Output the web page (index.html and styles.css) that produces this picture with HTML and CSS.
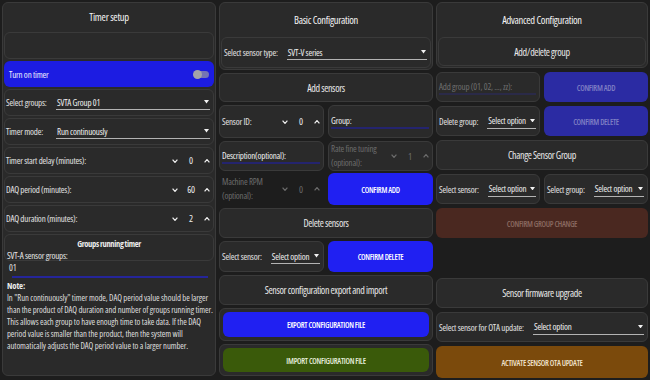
FILE: index.html
```html
<!DOCTYPE html>
<html lang="en">
<head>
<meta charset="utf-8">
<title>Sensor configuration</title>
<link rel="stylesheet" href="styles.css">
</head>
<body>
<main class="app">
  <!-- LEFT: Timer setup -->
  <section class="panel timer">
    <h2 class="title">Timer setup</h2>
    <div class="box"></div>
    <div class="toggle-row"><span>Turn on timer</span><span class="switch"><span class="knob"></span></span></div>
    <div class="box row"><span class="lbl w50">Select groups:</span><div class="select"><span>SVTA Group 01</span><svg class="caret" viewBox="0 0 6 4"><path d="M0 0H6L3 4Z"/></svg></div></div>
    <div class="box row"><span class="lbl w50">Timer mode:</span><div class="select"><span>Run continuously</span><svg class="caret" viewBox="0 0 6 4"><path d="M0 0H6L3 4Z"/></svg></div></div>
    <div class="box row"><span class="lbl grow">Timer start delay (minutes):</span><div class="spin"><svg class="chev" viewBox="0 0 6 4"><path d="M0.6 0.6L3 3.4L5.4 0.6"/></svg><span class="num">0</span><svg class="chev" viewBox="0 0 6 4"><path d="M0.6 3.4L3 0.6L5.4 3.4"/></svg></div></div>
    <div class="box row"><span class="lbl grow">DAQ period (minutes):</span><div class="spin"><svg class="chev" viewBox="0 0 6 4"><path d="M0.6 0.6L3 3.4L5.4 0.6"/></svg><span class="num">60</span><svg class="chev" viewBox="0 0 6 4"><path d="M0.6 3.4L3 0.6L5.4 3.4"/></svg></div></div>
    <div class="box row"><span class="lbl grow">DAQ duration (minutes):</span><div class="spin"><svg class="chev" viewBox="0 0 6 4"><path d="M0.6 0.6L3 3.4L5.4 0.6"/></svg><span class="num">2</span><svg class="chev" viewBox="0 0 6 4"><path d="M0.6 3.4L3 0.6L5.4 3.4"/></svg></div></div>
    <div class="box groups">
      <h3 class="sub">Groups running timer</h3>
      <div class="gl">SVT-A sensor groups:</div>
      <div class="gv">01</div>
      <div class="gline"></div>
      <p class="note"><b>Note:</b><br>In "Run continuously" timer mode, DAQ period value should be larger<br>than the product of DAQ duration and number of groups running timer.<br>This allows each group to have enough time to take data. If the DAQ<br>period value is smaller than the product, then the system will<br>automatically adjusts the DAQ period value to a larger number.</p>
    </div>
  </section>

  <!-- MIDDLE: Basic configuration -->
  <section class="col mid">
    <div class="panel head">
      <h2 class="title">Basic Configuration</h2>
      <div class="box row"><span class="lbl">Select sensor type:</span><div class="select"><span>SVT-V series</span><svg class="caret" viewBox="0 0 6 4"><path d="M0 0H6L3 4Z"/></svg></div></div>
    </div>
    <div class="box hdr h29">Add sensors</div>
    <div class="pair h33">
      <div class="box row"><span class="lbl grow">Sensor ID:</span><div class="spin"><svg class="chev" viewBox="0 0 6 4"><path d="M0.6 0.6L3 3.4L5.4 0.6"/></svg><span class="num">0</span><svg class="chev" viewBox="0 0 6 4"><path d="M0.6 3.4L3 0.6L5.4 3.4"/></svg></div></div>
      <div class="box row"><div class="input"><span>Group:</span></div></div>
    </div>
    <div class="pair h29">
      <div class="box row"><div class="input"><span>Description(optional):</span></div></div>
      <div class="box row dis"><span class="lbl grow two">Rate fine tuning<br>(optional):</span><div class="spin"><svg class="chev" viewBox="0 0 6 4"><path d="M0.6 0.6L3 3.4L5.4 0.6"/></svg><span class="num">1</span><svg class="chev" viewBox="0 0 6 4"><path d="M0.6 3.4L3 0.6L5.4 3.4"/></svg></div></div>
    </div>
    <div class="pair h32">
      <div class="row plain dis"><span class="lbl grow two">Machine RPM<br>(optional):</span><div class="spin"><svg class="chev" viewBox="0 0 6 4"><path d="M0.6 0.6L3 3.4L5.4 0.6"/></svg><span class="num">0</span><svg class="chev" viewBox="0 0 6 4"><path d="M0.6 3.4L3 0.6L5.4 3.4"/></svg></div></div>
      <button class="btn blue">CONFIRM ADD</button>
    </div>
    <div class="box hdr h30">Delete sensors</div>
    <div class="pair h31">
      <div class="box row"><span class="lbl">Select sensor:</span><div class="select"><span>Select option</span><svg class="caret" viewBox="0 0 6 4"><path d="M0 0H6L3 4Z"/></svg></div></div>
      <button class="btn blue">CONFIRM DELETE</button>
    </div>
    <div class="box hdr h30">Sensor configuration export and import</div>
    <div class="box card h33"><button class="btn blue">EXPORT CONFIGURATION FILE</button></div>
    <div class="box card h32"><button class="btn green">IMPORT CONFIGURATION FILE</button></div>
  </section>

  <!-- RIGHT: Advanced configuration -->
  <section class="col right">
    <div class="panel head">
      <h2 class="title">Advanced Configuration</h2>
      <div class="box hdr inner">Add/delete group</div>
    </div>
    <div class="pair h30">
      <div class="box row"><div class="input ph"><span>Add group (01, 02, ..., zz):</span></div></div>
      <button class="btn blue-dis">CONFIRM ADD</button>
    </div>
    <div class="pair h30">
      <div class="box row"><span class="lbl">Delete group:</span><div class="select"><span>Select option</span><svg class="caret" viewBox="0 0 6 4"><path d="M0 0H6L3 4Z"/></svg></div></div>
      <button class="btn blue-dis">CONFIRM DELETE</button>
    </div>
    <div class="box hdr h30">Change Sensor Group</div>
    <div class="pair h30">
      <div class="box row"><span class="lbl">Select sensor:</span><div class="select"><span>Select option</span><svg class="caret" viewBox="0 0 6 4"><path d="M0 0H6L3 4Z"/></svg></div></div>
      <div class="box row"><span class="lbl">Select group:</span><div class="select"><span>Select option</span><svg class="caret" viewBox="0 0 6 4"><path d="M0 0H6L3 4Z"/></svg></div></div>
    </div>
    <button class="btn red-dis h30">CONFIRM GROUP CHANGE</button>
    <div class="spacer"></div>
    <div class="box hdr h30">Sensor firmware upgrade</div>
    <div class="box row h30"><span class="lbl">Select sensor for OTA update:</span><div class="select"><span>Select option</span><svg class="caret" viewBox="0 0 6 4"><path d="M0 0H6L3 4Z"/></svg></div></div>
    <button class="btn orange h32">ACTIVATE SENSOR OTA UPDATE</button>
  </section>
</main>
</body>
</html>
```

FILE: styles.css
```css
* {
  box-sizing: border-box;
  margin: 0;
  padding: 0;
}

html, body {
  width: 650px;
  height: 380px;
  overflow: hidden;
}

body {
  background: #1d1d1d;
  color: #e4e4e4;
  font-family: "Open Sans", "Liberation Sans", sans-serif;
  font-stretch: 75%;
  font-size: 9px;
  letter-spacing: -0.2px;
}

.app {
  display: grid;
  grid-template-columns: 214px 214px 212px;
  column-gap: 3px;
  padding: 2px;
  height: 380px;
}

.panel,
.box {
  background: #2a2a2a;
  border: 1px solid #3a3a3a;
  border-radius: 6px;
}

/* ---------- left panel ---------- */
.timer {
  display: flex;
  flex-direction: column;
  gap: 2px;
  padding: 0 1px 2px;
  height: 374px;
}

.title {
  font-size: 10.5px;
  font-weight: 500;
  letter-spacing: -0.3px;
  color: #f4f4f4;
  text-align: center;
  display: flex;
  align-items: center;
  justify-content: center;
}

.timer .title { height: 27px; }
.timer > .box { height: 27px; flex: none; }

.toggle-row {
  height: 26px;
  background: #1c1ce2;
  border-radius: 6px;
  display: flex;
  align-items: center;
  justify-content: space-between;
  padding: 0 5px 0 5px;
  color: #eeeeff;
}

.switch {
  position: relative;
  width: 15px;
  height: 7px;
  border-radius: 4px;
  background: #7474b4;
}

.knob {
  position: absolute;
  left: -1px;
  top: -1px;
  width: 9px;
  height: 9px;
  border-radius: 50%;
  background: #a3a3a8;
}

.row {
  display: flex;
  align-items: center;
  padding: 0 3px 0 2px;
  gap: 9px;
}

.timer .row { padding-left: 1px; }

.lbl {
  color: #e2e2e2;
  white-space: nowrap;
}

.w50 {
  width: 41px;
  flex: none;
}

.grow { flex: 1; }

.two {
  white-space: normal;
  line-height: 14px;
}

.select {
  flex: 1;
  min-width: 0;
  display: flex;
  align-items: center;
  justify-content: space-between;
  height: 15px;
  border-bottom: 1px solid #b3b3b3;
  padding: 0 1px;
  color: #f0f0f0;
  white-space: nowrap;
}

.caret {
  width: 5px;
  height: 3.5px;
  fill: #f2f2f2;
  flex: none;
}

.spin {
  display: flex;
  align-items: center;
  gap: 7px;
  color: #f0f0f0;
}

.chev {
  width: 6px;
  height: 4px;
  fill: none;
  stroke: currentColor;
  stroke-width: 1.2;
}

.num {
  min-width: 12px;
  text-align: center;
  font-size: 9.5px;
}

.dis .lbl,
.dis .spin {
  color: #6c6c6c;
}

/* groups running timer */
.groups {
  flex: 1;
  padding: 3px 2px 0 2px;
}

.sub {
  font-size: 8.5px;
  font-weight: 700;
  letter-spacing: -0.35px;
  text-align: center;
  line-height: 12px;
  color: #ececec;
}

.gl,
.gv {
  line-height: 12px;
}

.gv {
  padding-left: 2px;
}

.gline {
  height: 2px;
  margin: 2px 3px 0 5px;
  background: #25259a;
}

.note {
  margin-top: 2px;
  font-size: 8.7px;
  letter-spacing: -0.1px;
  line-height: 12px;
  color: #dedede;
  white-space: nowrap;
}

.note b { color: #ececec; }

/* ---------- columns ---------- */
.col {
  display: flex;
  flex-direction: column;
  gap: 3px;
  height: 376px;
}

.right { gap: 4px; }

.head {
  display: flex;
  flex-direction: column;
  padding: 0 1px 1px;
}

.mid .head { height: 68px; }
.right .head { height: 66px; }

.head .title {
  height: 34px;
  flex: none;
}

.head .box {
  flex: 1;
}

.hdr {
  display: flex;
  align-items: center;
  justify-content: center;
  font-size: 10px;
  color: #e8e8e8;
  letter-spacing: -0.35px;
}

.pair {
  display: grid;
  grid-template-columns: 1fr 1fr;
  gap: 4px;
}

.pair > * { min-width: 0; }

.plain {
  border: 1px solid transparent;
}

.input {
  flex: 1;
  height: 15px;
  border-bottom: 2px solid #24246e;
  display: flex;
  align-items: center;
  color: #f0f0f0;
  white-space: nowrap;
}

.input.ph {
  color: #6e6e6e;
  border-bottom-color: #2a2a48;
}

.btn {
  border: none;
  border-radius: 6px;
  font-family: inherit;
  font-stretch: 75%;
  font-size: 8px;
  font-weight: 600;
  letter-spacing: -0.3px;
  color: #ffffff;
  display: flex;
  align-items: center;
  justify-content: center;
}

.blue { background: #2020f2; }
.green { background: #3a5a0a; color: #e6eedd; }
.blue-dis { background: #2b2ba3; color: #7f7fc4; }
.red-dis { background: #4a2820; color: #8a6a60; }
.orange { background: #7b4a0c; color: #f0e2cc; }

.card {
  padding: 3px;
  display: flex;
}

.card .btn { flex: 1; }

.spacer { flex: 1; }

.h29 { height: 29px; }
.h30 { height: 30px; }
.h31 { height: 31px; }
.h32 { height: 32px; }
.h33 { height: 33px; }
```
